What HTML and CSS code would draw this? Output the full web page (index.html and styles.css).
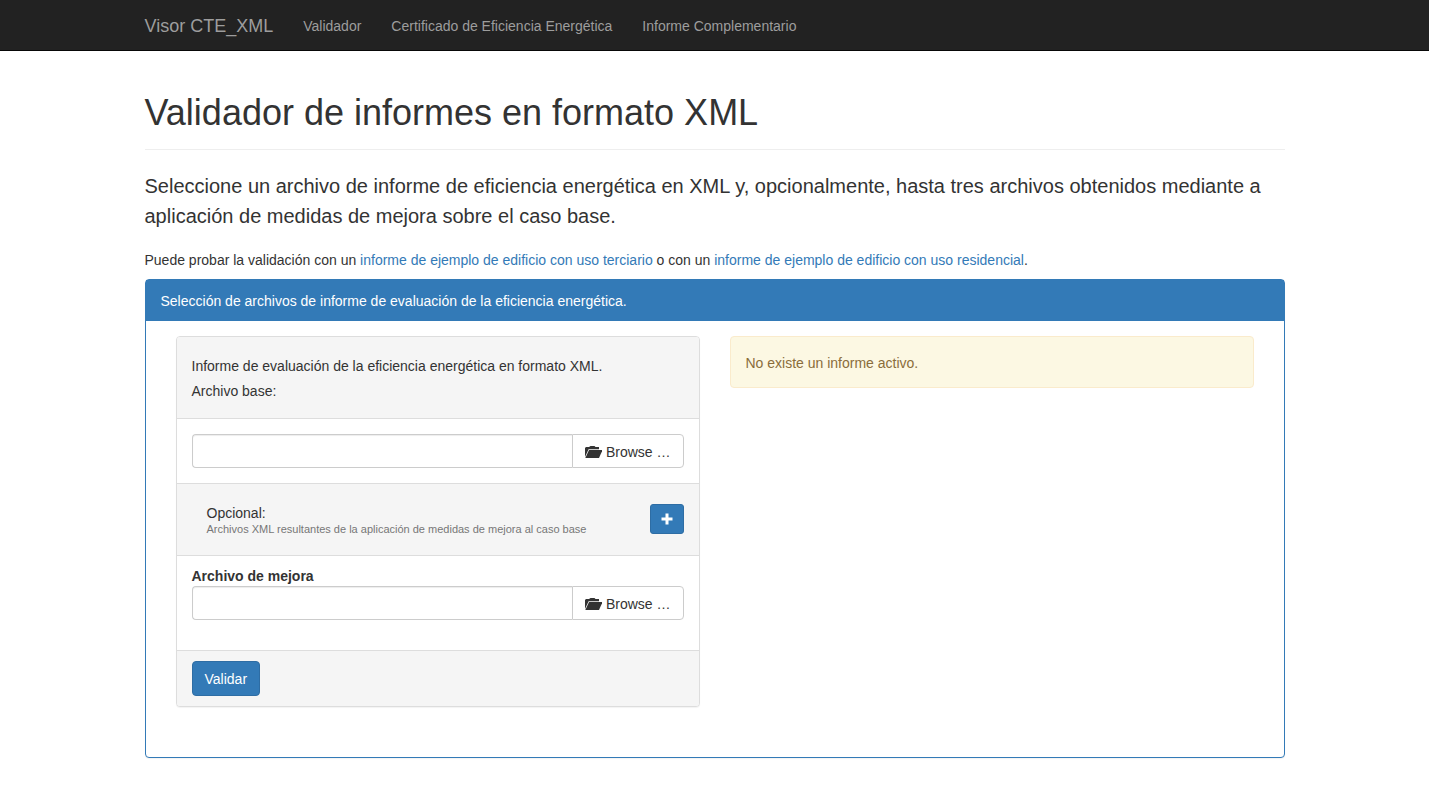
FILE: index.html
```html
<!DOCTYPE html>
<html lang="es">
<head>
<meta charset="utf-8">
<meta name="viewport" content="width=device-width, initial-scale=1">
<title>Visor CTE_XML</title>
<link rel="stylesheet" href="styles.css">
</head>
<body>
<svg class="sprite" width="0" height="0" aria-hidden="true">
  <symbol id="folder-open" viewBox="0 0 17 14">
    <path d="M0 12V3L1 2H4L5.500 1H9.500L10.500 2H14V4.300H3.600L0 12Z"/>
    <path d="M4 5H17.500L14 13H.300Z"/>
  </symbol>
  <symbol id="plus" viewBox="0 0 12 12">
    <path d="M4.500 .5H7.500V4.500H11.500V7.500H7.500V11.500H4.500V7.500H.5V4.500H4.500Z"/>
  </symbol>
</svg>
<nav class="navbar">
  <div class="container navbar-inner">
    <a class="brand" href="#">Visor CTE_XML</a>
    <a class="nav-link" href="#">Validador</a>
    <a class="nav-link" href="#">Certificado de Eficiencia Energética</a>
    <a class="nav-link" href="#">Informe Complementario</a>
  </div>
</nav>
<main class="container">
  <header class="page-header">
    <h1 class="title">Validador de informes en formato XML</h1>
  </header>
  <p class="lead">Seleccione un archivo de informe de eficiencia energética en XML y, opcionalmente, hasta tres archivos obtenidos mediante a aplicación de medidas de mejora sobre el caso base.</p>
  <p class="hint">Puede probar la validación con un <a class="link" href="#">informe de ejemplo de edificio con uso terciario</a> o con un <a class="link" href="#">informe de ejemplo de edificio con uso residencial</a>.</p>
  <section class="panel panel-primary">
    <div class="panel-title">Selección de archivos de informe de evaluación de la eficiencia energética.</div>
    <div class="columns">
      <form class="panel">
        <div class="section section-intro">
          <p class="intro">Informe de evaluación de la eficiencia energética en formato XML.</p>
          <label for="base">Archivo base:</label>
        </div>
        <div class="section-body">
          <div class="file-group">
            <input class="file-name" id="base" type="text">
            <button class="btn btn-browse" type="button"><svg class="icon-folder" aria-hidden="true"><use href="#folder-open"/></svg>Browse …</button>
          </div>
        </div>
        <div class="section section-optional">
          <div class="optional-text">
            <div>Opcional:</div>
            <small class="small">Archivos XML resultantes de la aplicación de medidas de mejora al caso base</small>
          </div>
          <button class="btn btn-primary btn-add" type="button" aria-label="Añadir archivo"><svg class="icon-plus" aria-hidden="true"><use href="#plus"/></svg></button>
        </div>
        <div class="section-body section-upgrade">
          <label class="upgrade-label" for="upgrade">Archivo de mejora</label>
          <div class="file-group">
            <input class="file-name" id="upgrade" type="text">
            <button class="btn btn-browse" type="button"><svg class="icon-folder" aria-hidden="true"><use href="#folder-open"/></svg>Browse …</button>
          </div>
        </div>
        <div class="section section-footer">
          <button class="btn btn-primary" type="submit">Validar</button>
        </div>
      </form>
      <div class="alert">No existe un informe activo.</div>
    </div>
  </section>
</main>
</body>
</html>
```
FILE: styles.css
```css
* { box-sizing: border-box; }
body {
  margin: 0;
  font: 14px/20px "Helvetica Neue", Helvetica, "Liberation Sans", Arial, sans-serif;
  color: #333;
  background: #fff;
}
p, h1 { margin: 0; }
.sprite { display: block; }
.container { max-width: 1170px; margin: 0 auto; padding: 0 15px; }
.navbar { background: #222; border-bottom: 1px solid #080808; }
.navbar-inner { display: flex; }
.brand, .nav-link { padding: 16px 15px 14px; color: #9d9d9d; text-decoration: none; }
.brand { font-size: 18px; padding-left: 0; }
.page-header { margin: 42px 0 21px; padding-bottom: 16px; border-bottom: 1px solid #eee; }
.title { font-size: 36px; line-height: 40px; font-weight: 500; }
.lead { font-size: 20px; line-height: 30px; font-weight: 300; margin-bottom: 19px; }
.hint { margin-bottom: 9px; }
.link { color: #337ab7; text-decoration: none; }
.panel {
  border: 1px solid #ddd;
  border-radius: 4px;
  background: #fff;
  box-shadow: 0 1px 1px rgba(0, 0, 0, .05);
}
.panel-primary { border-color: #337ab7; margin-bottom: 20px; }
.panel-title {
  padding: 11px 15px 10px;
  background: #337ab7;
  color: #fff;
}
.columns {
  display: grid;
  grid-template-columns: 1fr 1fr;
  gap: 30px;
  align-items: start;
  padding: 15px 30px 50px;
}
.section { background: #f5f5f5; border-bottom: 1px solid #ddd; padding: 10px 15px; }
.section-intro { padding: 19px 15px 17px; border-radius: 3px 3px 0 0; }
.intro { margin-bottom: 5px; }
.section-body { padding: 15px; }
.file-group { display: flex; }
.file-name {
  flex: 1;
  min-width: 0;
  height: 34px;
  padding: 6px 12px;
  border: 1px solid #ccc;
  border-right: 0;
  border-radius: 4px 0 0 4px;
  box-shadow: inset 0 1px 1px rgba(0, 0, 0, .075);
  font: inherit;
  color: #555;
}
.btn {
  padding: 7px 12px 6px;
  border: 1px solid #ccc;
  border-radius: 4px;
  background: #fff;
  color: #333;
  font: inherit;
  cursor: pointer;
}
.btn-browse {
  display: flex;
  align-items: center;
  gap: 4px;
  height: 34px;
  border-radius: 0 4px 4px 0;
}
.btn-primary { background: #337ab7; border-color: #2e6da4; color: #fff; }
.icon-folder { width: 17px; height: 14px; fill: currentColor; }
.icon-plus { display: block; width: 12px; height: 12px; fill: currentColor; }
.section-optional {
  display: flex;
  justify-content: space-between;
  align-items: center;
  padding: 19px 15px 20px;
  border-top: 1px solid #ddd;
}
.optional-text { padding-left: 15px; }
.small { display: block; font-size: 11px; line-height: 12px; color: #777; }
.btn-add { padding: 8px 10px; border-radius: 3px; }
.section-upgrade { padding: 11px 15px 30px; }
.upgrade-label { display: block; line-height: 19px; font-weight: 700; }
.section-footer { border-top: 1px solid #ddd; border-bottom: 0; border-radius: 0 0 3px 3px; }
.alert {
  padding: 16px 15px 14px;
  border: 1px solid #faebcc;
  border-radius: 4px;
  background: #fcf8e3;
  color: #8a6d3b;
}
@media (max-width: 767px) {
  .columns { grid-template-columns: 1fr; padding: 15px; }
  .navbar-inner { flex-wrap: wrap; }
}
```
